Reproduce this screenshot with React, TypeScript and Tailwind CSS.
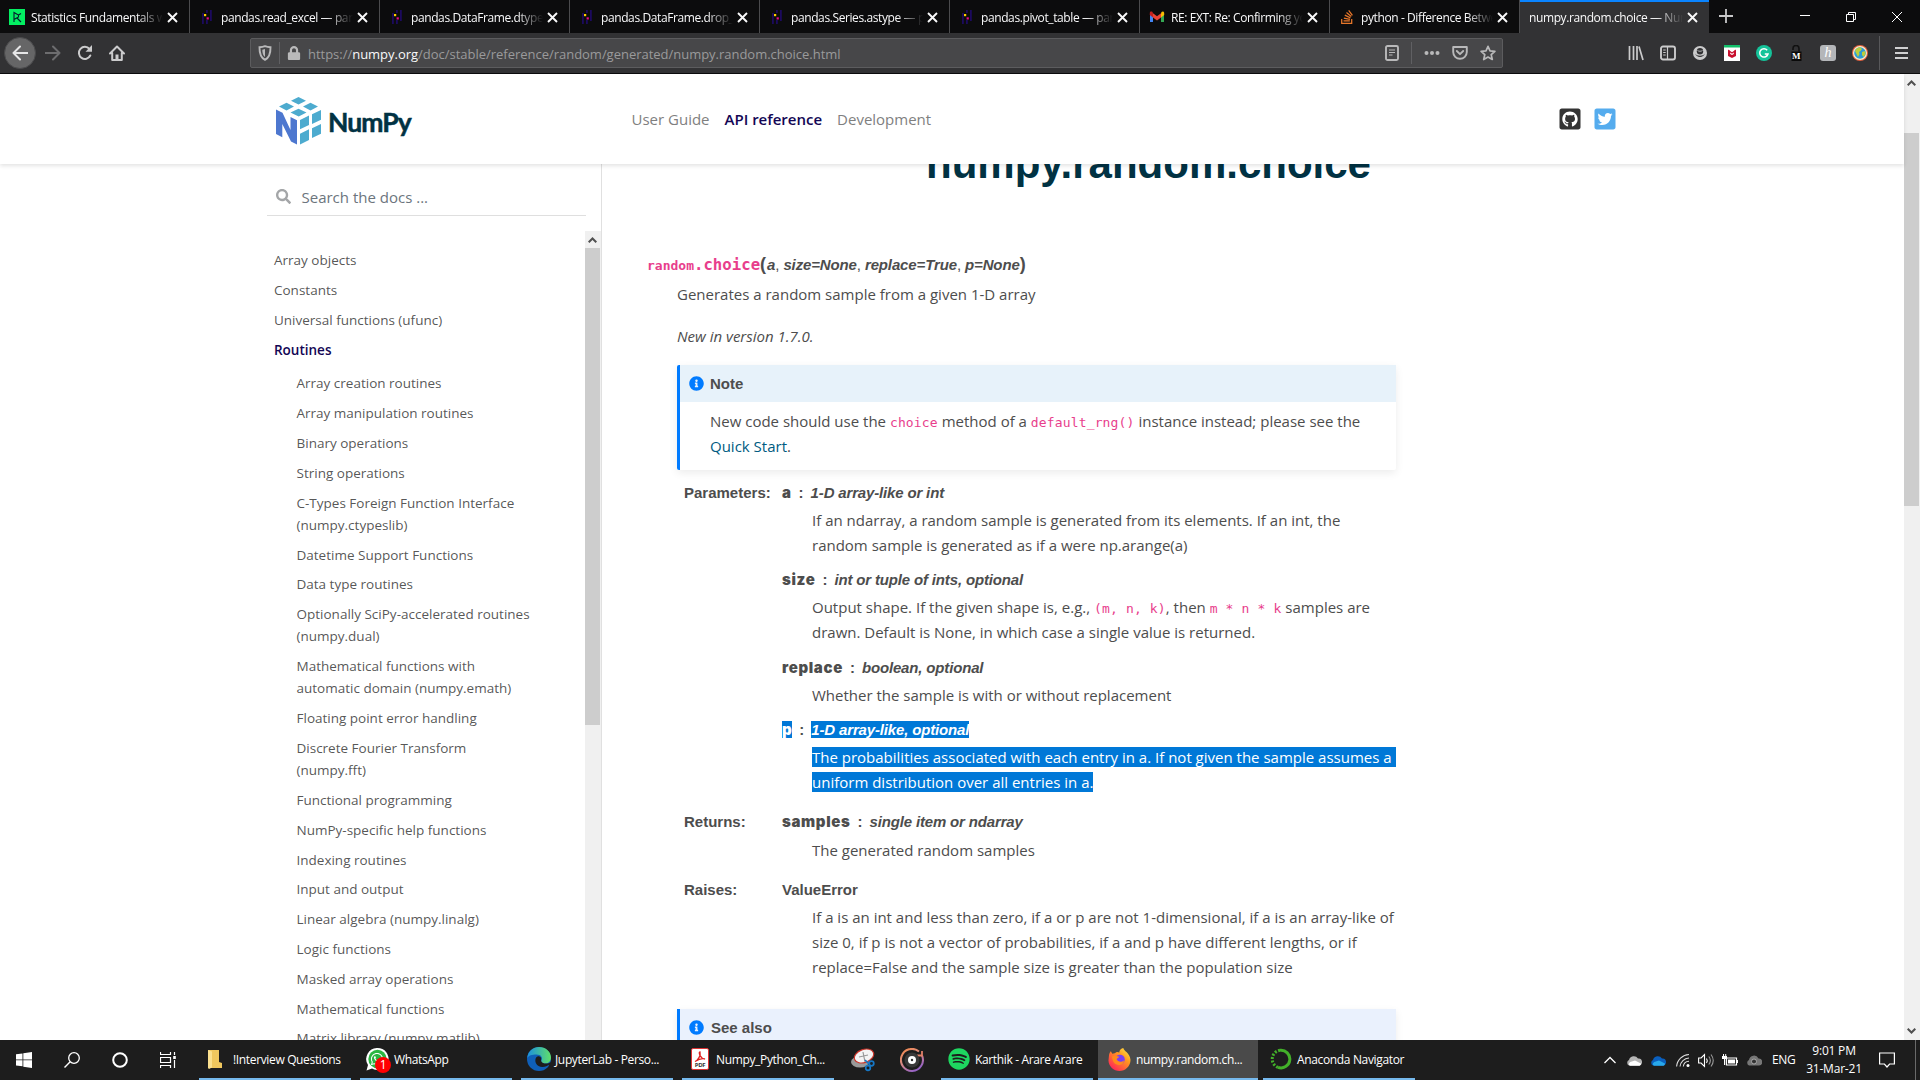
import React from "react";
import { FaSearch, FaInfoCircle, FaGithubSquare, FaTwitterSquare, FaSpotify, FaLock, FaWhatsapp, FaStackOverflow } from "react-icons/fa";

type Tab = { title: string; icon: "dc" | "pandas" | "gmail" | "so" | null; active?: boolean };

const tabs: Tab[] = [
  { title: "Statistics Fundamentals with", icon: "dc" },
  { title: "pandas.read_excel — pandas", icon: "pandas" },
  { title: "pandas.DataFrame.dtypes", icon: "pandas" },
  { title: "pandas.DataFrame.drop_d", icon: "pandas" },
  { title: "pandas.Series.astype — pan", icon: "pandas" },
  { title: "pandas.pivot_table — pand", icon: "pandas" },
  { title: "RE: EXT: Re: Confirming yo", icon: "gmail" },
  { title: "python - Difference Betwe", icon: "so" },
  { title: "numpy.random.choice — Num", icon: null, active: true },
];

function TabIcon({ kind }: { kind: Tab["icon"] }) {
  if (kind === "dc")
    return (
      <svg className="size-4 shrink-0" viewBox="0 0 16 16">
        <rect width="16" height="16" fill="#03ef62" />
        <path d="M5 13V3.500l4.500 2.500v2L5 10.500M8 9l4 4M9.500 6l2.500-1.500" stroke="#05192d" fill="none" strokeWidth="1.100" />
      </svg>
    );
  if (kind === "pandas")
    return (
      <svg className="size-4 shrink-0" viewBox="0 0 16 16">
        <path d="M3 4h1.800v11H3zM11 1h1.800v11H11zM7 1h1.800v3H7zM7 11h1.800v4H7z" fill="#1c0a5e" />
        <rect x="5" y="5" width="2.200" height="2.200" fill="#ffca00" />
        <rect x="7.600" y="8.300" width="2.200" height="2.200" fill="#e70488" />
      </svg>
    );
  if (kind === "gmail")
    return (
      <svg className="size-4 shrink-0" viewBox="0 0 16 16">
        <path d="M1 4v9h3V7z" fill="#4285f4" />
        <path d="M15 4v9h-3V7z" fill="#34a853" />
        <path d="M12 4.500V8.500l3.200-2.500V4c0-1.600-1.700-2-2.700-1z" fill="#fbbc04" />
        <path d="M4 4.200V8.500l4 3 4-3V4.200L8 7.200z" fill="#ea4335" />
        <path d="M.8 4v2L4 8.500V4.200L3.500 3C2.300 2.200.8 2.700.8 4z" fill="#c5221f" />
      </svg>
    );
  if (kind === "so") return <FaStackOverflow className="size-4 shrink-0 text-[#e8772a]" />;
  return null;
}

function TabBar() {
  return (
    <div className="flex h-[33px] bg-[#0c0c0d] text-[#f9f9fa]">
      {tabs.map((t) => (
        <div
          key={t.title}
          className={
            t.active
              ? "flex w-[189px] items-center border-t-2 border-[#0a84ff] bg-[#323234] pb-px pl-[9px]"
              : "flex w-[190px] items-center border-r border-[#4b4b4d] pt-px pl-[9px]"
          }
        >
          <TabIcon kind={t.icon} />
          <div
            className={
              (t.icon ? "ml-1.5 w-[132px]" : "w-[154px]") +
              " overflow-hidden pt-px text-[12px] leading-4 tracking-[-0.4px] whitespace-nowrap [mask-image:linear-gradient(to_right,black_calc(100%-26px),transparent)]"
            }
          >
            {t.title}
          </div>
          <svg className="ml-[3.500px] size-[11px] shrink-0" viewBox="0 0 11 11">
            <path d="M1 1l9 9M10 1l-9 9" stroke="#f9f9fa" strokeWidth="1.900" />
          </svg>
        </div>
      ))}
      <svg className="mt-[9px] ml-2.5 size-[14px]" viewBox="0 0 14 14">
        <path d="M7 0v14M0 7h14" stroke="#c8c8c9" strokeWidth="1.800" />
      </svg>
      <svg className="mt-[11px] ml-[67px] h-3 w-[103px]" viewBox="0 0 103 12">
        <g stroke="#fff" fill="none" strokeWidth="1">
          <path d="M0 4.500h10M92 1l10 10M102 1l-10 10" />
          <path d="M46.500 3.500h7v7h-7zM48.500 3.500v-2h7v7h-2" />
        </g>
      </svg>
    </div>
  );
}

function Toolbar() {
  return (
    <div className="flex h-[41px] items-center border-b border-[#0c0c0d] bg-[#323234] pl-1 text-[#b9b9ba]">
      <div className="flex size-8 items-center justify-center rounded-full border border-[#4a4a4c] bg-[#666667]">
        <svg className="size-4" viewBox="0 0 16 16">
          <path d="M15.500 8H1.500M8 1.500L1.500 8 8 14.500" stroke="#e6e6e7" strokeWidth="2" fill="none" strokeLinecap="round" strokeLinejoin="round" />
        </svg>
      </div>
      <svg className="ml-[9px] size-4" viewBox="0 0 16 16">
        <path d="M.5 8h14M8 1.500L14.500 8 8 14.500" stroke="#6d6d6f" strokeWidth="2" fill="none" strokeLinecap="round" strokeLinejoin="round" />
      </svg>
      <svg className="ml-4 size-4" viewBox="0 0 16 16">
        <path d="M13.300 10.500A6 6 0 1 1 12.500 4" stroke="#cbcbcc" strokeWidth="2" fill="none" strokeLinecap="round" />
        <path d="M15 0v6.800H8.500z" fill="#cbcbcc" />
      </svg>
      <svg className="ml-4 size-4" viewBox="0 0 16 16">
        <path d="M1 8.500L8 1.500l7 7M3.200 8v7h9.600V8" stroke="#cbcbcc" strokeWidth="2" fill="none" strokeLinecap="round" strokeLinejoin="round" />
        <path d="M6.500 9.500h3V15h-3z" fill="#cbcbcc" />
      </svg>
      <div className="ml-[125px] flex h-[30px] w-[1253px] items-center rounded-[2px] border border-[#5c5c5e] bg-[#474749] pl-[6px]">
        <svg className="size-4" viewBox="0 0 16 16">
          <path d="M8 1.200c2 .8 3.800 1 5.500 1C13.600 8 12.500 12.500 8 14.800 3.500 12.500 2.400 8 2.500 2.200c1.700 0 3.500-.2 5.500-1z" stroke="#b9b9ba" strokeWidth="1.900" fill="none" />
          <path d="M8 4v8c-2-1.500-2.700-4-2.700-7.200z" fill="#b9b9ba" />
        </svg>
        <div className="ml-1.5 h-[22px] w-px bg-[#606063]" />
        <FaLock className="ml-[7px] size-[14px]" />
        <div className="ml-[7px] w-[1077px] pt-[3px] text-[13px] tracking-[-0.02px] whitespace-nowrap text-[#9a9a9b]">
          https://<span className="text-[#f9f9fa]">numpy.org</span>/doc/stable/reference/random/generated/numpy.random.choice.html
        </div>
        <svg className="h-4 w-[14px]" viewBox="0 0 14 16">
          <rect x="1" y="1" width="12" height="14" rx="1.500" stroke="#b9b9ba" strokeWidth="1.900" fill="none" />
          <path d="M4 5h6M4 7.500h6M4 10h3.500" stroke="#b9b9ba" strokeWidth="1.200" />
        </svg>
        <div className="ml-3 h-[22px] w-px bg-[#606063]" />
        <svg className="ml-3 h-4 w-4" viewBox="0 0 16 16">
          <g fill="#b9b9ba"><circle cx="2.500" cy="8" r="2" /><circle cx="8" cy="8" r="2" /><circle cx="13.500" cy="8" r="2" /></g>
        </svg>
        <svg className="ml-3 size-4" viewBox="0 0 16 16">
          <path d="M1.200 2h13.600v5a6.800 6.800 0 0 1-13.600 0z" stroke="#b9b9ba" strokeWidth="1.900" fill="none" strokeLinejoin="round" />
          <path d="M4.800 6L8 9.200 11.200 6" stroke="#b9b9ba" strokeWidth="1.900" fill="none" strokeLinecap="round" strokeLinejoin="round" />
        </svg>
        <svg className="ml-3 size-4" viewBox="0 0 16 16">
          <path d="M8 1.300l2 4.500 4.900.5-3.700 3.300 1.100 4.900L8 12l-4.300 2.500 1.100-4.900L1.100 6.300 6 5.800z" stroke="#b9b9ba" strokeWidth="1.700" fill="none" strokeLinejoin="round" />
        </svg>
      </div>
      <svg className="ml-[125px] size-4" viewBox="0 0 16 16">
        <path d="M1.500 1v14M5.500 1v14M9 1v14M11 1.500l4 13.500" stroke="#cbcbcc" strokeWidth="1.700" />
      </svg>
      <svg className="ml-4 size-4" viewBox="0 0 16 16">
        <rect x="1" y="1.500" width="14" height="13" rx="2" stroke="#cbcbcc" strokeWidth="1.900" fill="none" />
        <path d="M7.500 2v12M3.200 5h2.500M3.200 7.500h2.500M3.200 10h2.500" stroke="#cbcbcc" strokeWidth="1.200" />
      </svg>
      <svg className="ml-4 size-4" viewBox="0 0 16 16">
        <circle cx="8" cy="8" r="7" fill="#cbcbcc" />
        <circle cx="8" cy="6.300" r="3.200" fill="#323234" />
        <path d="M3.200 8.500c.8 4.500 8.800 4.500 9.600 0-.8 1.500-2.300 2.200-4.800 2.200S4 10 3.200 8.500z" fill="#323234" />
        <path d="M5.500 5.500c1.500 1 3.500 1 5 0" stroke="#cbcbcc" strokeWidth=".8" fill="none" />
      </svg>
      <svg className="ml-4 size-4" viewBox="0 0 16 16">
        <rect width="16" height="16" fill="#fff" />
        <rect width="16" height="2.500" fill="#12c06a" />
        <path d="M4 4.500l2.200 1.500v3L8 10l1.800-1V6L12 4.500v6.500L8 13l-4-2z" fill="#c8102e" />
        <path d="M5 5.200l3 2 3-2v1.600L8 8.800l-3-2z" fill="#c8102e" />
      </svg>
      <svg className="ml-4 size-4" viewBox="0 0 16 16">
        <circle cx="8" cy="8" r="8" fill="#15c39a" />
        <path d="M11.200 5.200A4.200 4.200 0 1 0 12 9H8.800" stroke="#fff" strokeWidth="1.500" fill="none" />
      </svg>
      <div className="relative ml-4 size-4">
        <svg className="size-4" viewBox="0 0 16 16">
          <path d="M5 5V3.500a3 3 0 0 1 6 0V6.500" stroke="#111" strokeWidth="1.600" fill="none" />
          <rect x="3.500" y="6.500" width="10" height="9.500" fill="#0a0a0a" />
        </svg>
        <span className="absolute top-[6px] left-[4px] font-['Liberation_Serif'] text-[9px] leading-[10px] font-bold text-white">M</span>
      </div>
      <div className="ml-4 flex size-4 items-center justify-center rounded-[3px] bg-[#b4b6b9] pb-px font-['Liberation_Serif'] text-[14px] leading-4 text-white italic">h</div>
      <svg className="ml-4 size-4" viewBox="0 0 16 16">
        <circle cx="8" cy="8" r="8" fill="#e2603f" />
        <circle cx="8" cy="8" r="7" fill="#fbeecb" />
        <circle cx="8" cy="8" r="5.800" fill="#2c9bd6" />
        <path d="M3 6c1-2.500 3-3.500 5-3.700L10 4 8.500 6 7 7l.5 2L6 12 4.500 9zM10 7l3-1 .5 3-2 3-1.500-2z" fill="#b9cf3c" />
      </svg>
      <div className="ml-[11px] h-[34px] w-px bg-[#58585a]" />
      <svg className="ml-[15px] h-[14px] w-[13px]" viewBox="0 0 13 14">
        <path d="M0 2h13M0 7h13M0 12h13" stroke="#d0d0d1" strokeWidth="2" />
      </svg>
    </div>
  );
}

function NumpyLogo() {
  return (
    <div className="flex items-start pt-[23px]">
      <svg className="h-12 w-[46px]" viewBox="0 0 46 48">
        <g fill="#4dabcf">
          <path d="M15 3.700L22.500 0 30 3.700 22.500 7.400zM3 9.500L10.500 5.700 18 9.500 10.500 13.500zM27 9.500L34.500 5.700 42 9.500 34.500 13.500zM14.500 15.500L22.500 11.700 30.500 15.500 22.700 19.500z" />
          <path d="M24 23l9-4.500V28l-9 4.300zM36 17.200L45 13v9.700l-9 4.200zM24 36.700l9-4.400V43l-9 4.500zM36 31.200l9-4.200v9.700l-9 4.300z" />
        </g>
        <path d="M0 12.500l6.500 3.300 8 17.200V20l6.500 3.200v24.300L15 44.500 6.300 27v13.300L0 37z" fill="#4d77cf" />
      </svg>
      <span className="ml-[6px] pt-[8px] font-['Lato'] text-[26.500px] leading-[34px] font-bold tracking-[-0.9px] text-[#013243] [-webkit-text-stroke:0.5px_#013243]">NumPy</span>
    </div>
  );
}

function Header() {
  return (
    <header className="relative z-10 flex h-[90px] bg-white pl-[276px] shadow-[0_2px_4px_0_rgba(0,0,0,0.11)]">
      <div className="w-[355.500px]"><NumpyLogo /></div>
      <nav className="flex w-[926px] gap-[15px] pt-[33px] text-[15px] leading-[25px] text-[#7f7f7f]">
        <span>User Guide</span>
        <span className="font-semibold text-[#130654]">API reference</span>
        <span>Development</span>
      </nav>
      <div className="flex gap-[11px] pt-[33px]">
        <FaGithubSquare className="size-[24px] text-[#333]" />
        <FaTwitterSquare className="size-[24px] text-[#55acee]" />
      </div>
    </header>
  );
}

const topLinks = ["Array objects", "Constants", "Universal functions (ufunc)"];
const subLinks = [
  "Array creation routines",
  "Array manipulation routines",
  "Binary operations",
  "String operations",
  "C-Types Foreign Function Interface (numpy.ctypeslib)",
  "Datetime Support Functions",
  "Data type routines",
  "Optionally SciPy-accelerated routines (numpy.dual)",
  "Mathematical functions with automatic domain (numpy.emath)",
  "Floating point error handling",
  "Discrete Fourier Transform (numpy.fft)",
  "Functional programming",
  "NumPy-specific help functions",
  "Indexing routines",
  "Input and output",
  "Linear algebra (numpy.linalg)",
  "Logic functions",
  "Masked array operations",
  "Mathematical functions",
  "Matrix library (numpy.matlib)",
];

function Chevron({ down = false, className = "" }: { down?: boolean; className?: string }) {
  return (
    <svg className={"h-[6px] w-[9px] " + className} viewBox="0 0 9 6">
      <path d={down ? "M.7 .7l3.800 3.800L8.300 .7" : "M.7 5.300l3.800-3.800 3.800 3.800"} stroke="#505050" strokeWidth="2" fill="none" />
    </svg>
  );
}

function Sidebar() {
  return (
    <aside className="flex h-full w-[335px] flex-col border-r border-[#e0e0e0]">
      <div className="flex h-[52px] w-[319px] shrink-0 items-center border-b border-[#dfdfdf] pt-[14px] pl-[9px]">
        <FaSearch className="size-[15px] text-[#a4a6a8]" />
        <span className="ml-[10.500px] text-[15px] leading-[22px] text-[#6c757d]">Search the docs ...</span>
      </div>
      <div className="mt-[15px] flex min-h-0 flex-1">
        <div className="w-[318px] overflow-hidden pt-[14.500px] pl-[7px] text-[13.5px] leading-[22.275px] text-[#4d4d4d]/95">
          {topLinks.map((l) => (
            <div key={l} className="py-[3.75px]">{l}</div>
          ))}
          <div className="py-[3.75px] font-semibold text-[#130654]">Routines</div>
          <div className="w-[264px] pt-[4px] pl-[22.500px]">
            {subLinks.map((l) => (
              <div key={l} className="py-[3.75px]">{l}</div>
            ))}
          </div>
        </div>
        <div className="w-4 bg-[#f0f0f0]">
          <div className="flex h-[17px] w-[15px] items-center justify-center"><Chevron /></div>
          <div className="h-[477px] w-[15px] bg-[#cdcdcd]" />
        </div>
      </div>
    </aside>
  );
}

function Code({ children }: { children: React.ReactNode }) {
  return <code className="font-['DejaVu_Sans_Mono'] text-[13px] leading-none tracking-[0.15px] whitespace-pre text-[#e83e8c]">{children}</code>;
}

function Term({ name, type, selected = false }: { name: string; type: string; selected?: boolean }) {
  const hl = selected ? " bg-[#0078d7] text-white" : "";
  return (
    <div className="flex h-7 font-['Liberation_Sans'] text-[15px] leading-[25px] font-bold">
      <span><span className={"inline-block font-['Inter'] text-[15px] leading-[17px] font-black tracking-[0.65px]" + hl}>{name}</span></span>
      <span className="mx-[7px]">:</span>
      <span><span className={"inline-block leading-[17px] tracking-[-0.16px] italic" + hl}>{type}</span></span>
    </div>
  );
}

function Field({ label, className, children }: { label: string; className: string; children: React.ReactNode }) {
  return (
    <div className={"flex pl-[7px] " + className}>
      <div className="w-[98px] shrink-0 font-['Liberation_Sans'] text-[15px] leading-[25px] font-bold">{label}</div>
      <div className="flex-1">{children}</div>
    </div>
  );
}

function Content() {
  return (
    <main className="flex-1 overflow-hidden pl-[45px] text-[15px] leading-[25px] text-[#4d4d4d]">
      <h1 className="-mt-[25px] pl-[279px] font-['Liberation_Sans'] text-[42px] leading-[50px] font-bold text-[#013243]">numpy.random.choice</h1>
      <div className="mt-[63px] h-[30px] font-['Liberation_Sans'] font-bold whitespace-nowrap">
        <span className="font-['DejaVu_Sans_Mono'] text-[#e83e8c]">
          <span className="text-[13px]">random</span>
          <span className="text-[15.700px]">.choice</span>
        </span>
        <span className="text-[18px]">(</span>
        <span className="ml-px tracking-[-0.13px]"><i>a</i><span className="font-normal">, </span><i>size=None</i><span className="font-normal">, </span><i>replace=True</i><span className="font-normal">, </span><i>p=None</i></span>
        <span className="text-[18px]">)</span>
      </div>
      <div className="w-[749px] pl-[30px]">
        <p className="h-[42px]">Generates a random sample from a given 1-D array</p>
        <p className="h-[41px] italic">New in version 1.7.0.</p>
        <div className="h-[105px] rounded-[2px] border-l-[3px] border-[#007bff] shadow-[0_3px_8px_rgba(0,0,0,0.08)]">
          <div className="flex h-[37px] items-center bg-[#e7f2fa] pl-[9px] font-['Liberation_Sans'] font-bold">
            <FaInfoCircle className="size-[15px] text-[#007bff]" />
            <span className="ml-1.5">Note</span>
          </div>
          <p className="pt-[7px] pl-[30px] leading-[24.500px]">
            New code should use the <Code>choice</Code> method of a <Code>default_rng()</Code> instance instead; please see the <span className="text-[#005b81]">Quick Start</span>.
          </p>
        </div>
        <Field label="Parameters:" className="mt-[10px]">
          <Term name="a" type="1-D array-like or int" />
          <p className="mb-[9px] pl-[30px]">If an ndarray, a random sample is generated from its elements. If an int, the random sample is generated as if a were np.arange(a)</p>
          <Term name="size" type="int or tuple of ints, optional" />
          <p className="mb-[11px] pl-[30px] leading-[24.500px]">
            Output shape. If the given shape is, e.g., <Code>(m, n, k)</Code>, then <Code>m * n * k</Code> samples are drawn. Default is None, in which case a single value is returned.
          </p>
          <Term name="replace" type="boolean, optional" />
          <p className="mb-[9px] pl-[30px]">Whether the sample is with or without replacement</p>
          <Term name="p" type="1-D array-like, optional" selected />
          <div className="pl-[30px] whitespace-nowrap text-white">
            <div><span className="mt-[2px] inline-block h-5 w-[584px] bg-[#0078d7] align-top leading-5">The probabilities associated with each entry in a. If not given the sample assumes a</span></div>
            <div className="-mt-px"><span className="mt-[3px] inline-block h-5 bg-[#0078d7] align-top leading-5">uniform distribution over all entries in a.</span></div>
          </div>
        </Field>
        <Field label="Returns:" className="mt-[15px]">
          <Term name="samples" type="single item or ndarray" />
          <p className="mt-px pl-[30px]">The generated random samples</p>
        </Field>
        <Field label="Raises:" className="mt-[14px]">
          <div className="h-7 font-['Liberation_Sans'] font-bold">ValueError</div>
          <p className="pl-[30px]">If a is an int and less than zero, if a or p are not 1-dimensional, if a is an array-like of size 0, if p is not a vector of probabilities, if a and p have different lengths, or if replace=False and the sample size is greater than the population size</p>
        </Field>
        <div className="mt-[29px] flex h-[37px] items-center border-l-[3px] border-[#007bff] bg-[#eaf1fd] pl-[9px] font-['Liberation_Sans'] font-bold shadow-[0_3px_8px_rgba(0,0,0,0.08)]">
          <FaInfoCircle className="size-[15px] text-[#007bff]" />
          <span className="ml-[7px]">See also</span>
        </div>
      </div>
    </main>
  );
}

function TaskItem({ className, icon, label, active = false }: { className: string; icon: React.ReactNode; label: string; active?: boolean }) {
  return (
    <div className={"flex h-10 items-center border-b-2 border-[#76b9ed] text-[12px] tracking-[-0.35px] whitespace-nowrap " + (active ? "bg-[#4a4a4a] " : "") + className}>
      {icon}
      <span className="pt-px">{label}</span>
    </div>
  );
}

function Taskbar() {
  return (
    <footer className="flex h-10 shrink-0 items-center bg-[#1d1d1d] pl-4 text-white">
      <svg className="size-4" viewBox="0 0 16 16">
        <path d="M0 2.300l6.500-.9v6H0zM7.300 1.300L16 0v7.400H7.300zM0 8.300h6.500v6L0 13.500zM7.300 8.300H16V16l-8.700-1.300z" fill="#fff" />
      </svg>
      <svg className="ml-8 size-4" viewBox="0 0 16 16">
        <circle cx="10" cy="6" r="5.300" stroke="#fff" strokeWidth="1.300" fill="none" />
        <path d="M6.200 9.800L.5 15.500" stroke="#fff" strokeWidth="1.400" />
      </svg>
      <svg className="ml-8 size-4" viewBox="0 0 16 16"><circle cx="8" cy="8" r="6.800" stroke="#fff" strokeWidth="2" fill="none" /></svg>
      <svg className="ml-8 size-4" viewBox="0 0 16 16">
        <path d="M.5 0v2.500h10V0M.5 16v-2.500h10V16M.5 5.500h10v5H.5zM14.500 0v3M14.500 8v8" stroke="#fff" strokeWidth="1.200" fill="none" />
        <rect x="13.200" y="4" width="2.600" height="3" fill="#fff" />
      </svg>
      <TaskItem className="ml-[23px] w-[152px] gap-[11px] pl-[9px]" label="!Interview Questions" icon={
        <svg className="h-5 w-[14px]" viewBox="0 0 14 20"><path d="M0 1h11v12l3 1v5H0z" fill="#f0c75e" /><path d="M0 1l4 1.500v16L1 20l-1-1z" fill="#fbe08f" /></svg>
      } />
      <TaskItem className="ml-[9px] w-[152px] pl-[6px]" label="WhatsApp" icon={
        <span className="relative mr-[5px] flex size-[23px] items-center justify-center">
          <svg className="size-[23px]" viewBox="0 0 23 23"><path d="M11.500 0a11 11 0 1 1-5.500 20.500L.5 22.500 2 17A11 11 0 0 1 11.500 0z" fill="#fff" /><circle cx="11.500" cy="11" r="9.200" fill="#2cb742" /></svg>
          <FaWhatsapp className="absolute top-[4px] left-[4px] size-[14px] text-white" />
          <span className="absolute top-[9px] left-[9px] flex size-4 items-center justify-center rounded-full bg-[#f00] text-[12px] leading-4">1</span>
        </span>
      } />
      <TaskItem className="ml-[9px] w-[152px] gap-1 pl-[6px]" label="JupyterLab - Perso..." icon={
        <svg className="size-6" viewBox="0 0 24 24">
          <defs>
            <linearGradient id="edgeTop" x1="0" x2="1"><stop stopColor="#1b8fe0" /><stop offset="1" stopColor="#5fe06a" /></linearGradient>
          </defs>
          <circle cx="12" cy="12" r="12" fill="#0f5fb8" />
          <path d="M.3 11C1 4 6 0 12 0c7 0 12 5 12 10.500 0 4-3 6-6 6s-4.500-1.500-3.500-3c1.500-3-.5-6-5-6C5 7.500 1.500 8.500.3 11z" fill="url(#edgeTop)" />
          <path d="M9.500 10c-3 4 0 10 6 10 3 0 5-1 6.500-2.200-.5 1.500 0 1.500 0 1.500l2-.5v-3.500c-3 1.500-8 2-9.500-.5-1-1.500 0-2.500-.5-4-1-1.500-3-2-4.500-.8z" fill="#1d1d1d" />
        </svg>
      } />
      <TaskItem className="ml-[9px] w-[152px] gap-[7px] pl-[9px]" label="Numpy_Python_Ch..." icon={
        <span className="relative flex h-[22px] w-[18px] justify-center rounded-[2px] border border-[#d33] bg-white">
          <svg className="mt-[2px] h-3 w-3" viewBox="0 0 12 12"><path d="M1 10.500c3-1 6-6 5-9.500-2 0 .5 7 5 7-3-1-6 0-10 2.500z" stroke="#e02020" strokeWidth="1.300" fill="none" /></svg>
          <span className="absolute bottom-0 text-[6px] leading-[7px] font-bold text-[#333]">PDF</span>
        </span>
      } />
      <svg className="ml-[17px] h-6 w-6" viewBox="0 0 24 24">
        <ellipse cx="9" cy="14" rx="9" ry="5.500" fill="#9a9a9a" />
        <ellipse cx="13" cy="8" rx="10" ry="6.500" transform="rotate(-20 13 8)" fill="#f4f4f4" stroke="#c9352b" strokeWidth="1.200" />
        <path d="M8 9l9-2M12 4l2 10" stroke="#999" strokeWidth="1.200" />
        <g stroke="#1677c5" strokeWidth="1.700" fill="none"><path d="M14 12l4 4" /><circle cx="20.500" cy="15.500" r="2.300" /><circle cx="17" cy="20" r="2.300" /></g>
      </svg>
      <svg className="ml-[25px] size-6" viewBox="0 0 24 24">
        <defs><linearGradient id="disc" x1="0" y1="0" x2=".6" y2="1"><stop stopColor="#f58a4b" /><stop offset=".5" stopColor="#d98a80" /><stop offset="1" stopColor="#9663c4" /></linearGradient></defs>
        <path d="M19 3.500a11 11 0 1 0 3 4" stroke="url(#disc)" strokeWidth="2" fill="none" />
        <path d="M17 7.500h5V3" stroke="#e08068" strokeWidth="1.800" fill="none" />
        <circle cx="12" cy="12" r="7.500" fill="#383838" />
        <circle cx="12" cy="12" r="4" fill="#fff" /><circle cx="12" cy="12" r="1.200" fill="#333" />
      </svg>
      <TaskItem className="ml-[17px] w-[152px] gap-[5px] pl-[7px]" label="Karthik - Arare Arare" icon={<FaSpotify className="size-[22px] text-[#1ed760]" />} />
      <TaskItem active className="ml-[5px] w-[160px] gap-[5px] pl-[10px]" label="numpy.random.ch..." icon={
        <svg className="size-[23px]" viewBox="0 0 24 24">
          <defs><linearGradient id="fox" x1="1" y1="0" x2="0.200" y2="1"><stop stopColor="#fff44f" /><stop offset=".4" stopColor="#ff9a1f" /><stop offset="1" stopColor="#ff1f5a" /></linearGradient></defs>
          <path d="M1 8c0-2 1.500-4 2-4.500L4.500 6 7 5.500C10 3 11 5 12 4.500 11.500 2.500 14 .5 16 0c0 3 7 5 7.500 12.500C23.500 19 18 24 12 24S.5 19 .5 13z" fill="url(#fox)" />
          <circle cx="12.500" cy="12" r="5" fill="#7a3ff0" />
          <path d="M4 9c3-2 6 0 8 0l-3 2.500c1 3 5 4 7.500 1.500C17 17 12 19 8.500 17 5 15 5 12 4 9z" fill="#ff8a1c" />
        </svg>
      } />
      <TaskItem className="ml-[5px] w-[152px] gap-[5px] pl-[7px]" label="Anaconda Navigator" icon={
        <svg className="size-[22px]" viewBox="0 0 22 22">
          <path d="M10 2.300A8.800 8.800 0 1 1 8 19.300" stroke="#43b02a" strokeWidth="3" fill="none" />
          <path d="M10 2.300A8.800 8.800 0 0 0 8 19.300" stroke="#43b02a" strokeWidth="3" strokeDasharray="2 1.500" fill="none" />
        </svg>
      } />
      <div className="ml-[189px] flex w-[312px] items-center">
        <svg className="h-2 w-3" viewBox="0 0 12 8"><path d="M.5 7L6 1.500 11.500 7" stroke="#fff" strokeWidth="1.300" fill="none" /></svg>
        <svg className="ml-2.5 h-[11px] w-4" viewBox="0 0 16 11"><path d="M3 10.500A3 3 0 0 1 3 5a5 5 0 0 1 9-1.500 3.500 3.500 0 0 1 1 7z" fill="#b5b5b5" /><path d="M4 10.800c-2-1-1-3.500 1-4l4-1.300 6 3c0 1.500-1 2.300-2 2.300z" fill="#fff" /></svg>
        <svg className="ml-2 h-[11px] w-4" viewBox="0 0 16 11"><path d="M3 10.500A3 3 0 0 1 3 5a5 5 0 0 1 9-1.500 3.500 3.500 0 0 1 1 7z" fill="#0a5fbe" /><path d="M4 10.800c-2-1-1-3.500 1-4l4-1.300 6 3c0 1.500-1 2.300-2 2.300z" fill="#28a8ea" /></svg>
        <svg className="ml-[10px] h-[14px] w-[14px]" viewBox="0 0 14 14">
          <g stroke="#ddd" strokeWidth="1.100" fill="none"><path d="M.6 13.500A13 13 0 0 1 13 1.500M4 13.500A9.500 9.500 0 0 1 13 5M7.300 13.500A6 6 0 0 1 13 8.300" /></g><circle cx="12" cy="12.500" r="1.500" fill="#fff" />
        </svg>
        <svg className="ml-2 h-[15px] w-4" viewBox="0 0 16 15">
          <path d="M.6 5h2.500L6.500 1.500v12L3.100 10H.6zM8.500 5.500c1 1.500 1 3 0 4.500" stroke="#fff" strokeWidth="1.100" fill="none" />
          <path d="M10.800 3.500c2 2.500 2 5.500 0 8M13 1.500c3 4 3 8 0 12" stroke="#999" strokeWidth="1.100" fill="none" />
        </svg>
        <svg className="ml-2 h-[15px] w-4" viewBox="0 0 16 15"><path d="M4.500 5h10v7h-10z" stroke="#fff" strokeWidth="1.200" fill="none" /><path d="M6 6.500h7v4H6zM15 7h1v3h-1zM0 3h5v3H0zM1 1h1v2H1zM3.200 1h1v2h-1zM2 6h1.200v6H2z" fill="#fff" /></svg>
        <svg className="ml-2 h-3 w-4" viewBox="0 0 16 12"><path d="M3 11.500A3 3 0 0 1 3 6a5 5 0 0 1 9.500-1.500 3.500 3.500 0 0 1 .5 7z" fill="#777" /><circle cx="8" cy="7.500" r="2.500" fill="#333" stroke="#aaa" /></svg>
        <span className="ml-[10px] w-6 text-[12px] tracking-[-0.4px]">ENG</span>
        <div className="ml-2 w-[60px] text-center text-[12px] leading-[18px] tracking-[-0.2px] whitespace-nowrap">9:01 PM<br />31-Mar-21</div>
        <svg className="ml-[15px] h-4 w-4" viewBox="0 0 16 16"><path d="M.6 1h14.800v11h-4.800L8 15l-2.600-3H.6z" stroke="#fff" strokeWidth="1.200" fill="none" /></svg>
        <div className="ml-auto h-10 w-px shrink-0 bg-[#6a6a6a]" />
      </div>
    </footer>
  );
}

export default function App() {
  return (
    <div className="flex h-[1080px] w-[1920px] flex-col overflow-hidden bg-white font-['Open_Sans',sans-serif]">
      <TabBar />
      <Toolbar />
      <div className="flex min-h-0 flex-1">
        <div className="flex w-[1904px] flex-col">
          <Header />
          <div className="flex min-h-0 flex-1 pl-[267px]">
            <Sidebar />
            <Content />
          </div>
        </div>
        <div className="flex w-4 flex-col items-center bg-[#f0f0f0]">
          <Chevron className="mt-[6px] mr-px" />
          <div className="mt-[47px] h-[373px] w-[15px] self-start bg-[#cdcdcd]" />
          <Chevron down className="mt-auto mr-px mb-[6px]" />
        </div>
      </div>
      <Taskbar />
    </div>
  );
}
